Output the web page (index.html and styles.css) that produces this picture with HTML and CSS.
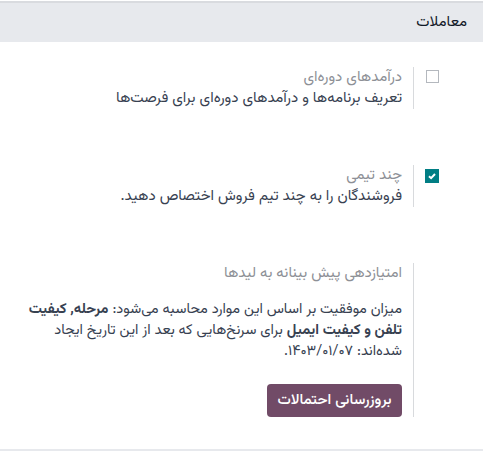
FILE: index.html
```html
<!DOCTYPE html>
<html lang="fa" dir="rtl">
<head>
<meta charset="utf-8">
<link rel="stylesheet" href="styles.css">
</head>
<body>
<div class="section-head">معاملات</div>
<div class="settings">
  <div class="setting">
    <div class="left-pane"><span class="check"></span></div>
    <div class="right-pane">
      <div class="label">درآمدهای دوره‌ای</div>
      <div class="desc">تعریف برنامه‌ها و درآمدهای دوره‌ای برای فرصت‌ها</div>
    </div>
  </div>
  <div class="setting">
    <div class="left-pane"><span class="check checked"><svg viewBox="0 0 14 14" width="14" height="14"><path d="M4 7.2 L6.1 9.2 L10 5" fill="none" stroke="#fff" stroke-width="2"/></svg></span></div>
    <div class="right-pane">
      <div class="label">چند تیمی</div>
      <div class="desc">فروشندگان را به چند تیم فروش اختصاص دهید.</div>
    </div>
  </div>
  <div class="setting">
    <div class="left-pane"></div>
    <div class="right-pane">
      <div class="label">امتیازدهی پیش بینانه به لیدها</div>
      <div class="para">میزان موفقیت بر اساس این موارد محاسبه می‌شود: <b>مرحله, کیفیت تلفن و کیفیت ایمیل</b> برای سرنخ‌هایی که بعد از این تاریخ ایجاد شده‌اند: ۱۴۰۳/۰۱/۰۷.</div>
      <div class="actions"><button class="btn-primary">بروزرسانی احتمالات</button></div>
    </div>
  </div>
</div>
<div class="next-head"></div>
</body>
</html>
```
FILE: styles.css
```css
html, body {
  margin: 0;
  padding: 0;
  background: #ffffff;
}
body {
  direction: rtl;
  font-family: "Vazirmatn", "Noto Sans Arabic", "DejaVu Sans", sans-serif;
  font-size: 15px;
  line-height: 21px;
  color: #374151;
  padding-top: 1px;
}
.section-head {
  border-top: 2px solid #d9dbdf;
  background: #e7e9ed;
  height: 39px;
  line-height: 39px;
  padding-right: 16px;
  font-weight: normal;
  color: #111827;
}
.settings {
  padding-top: 25px;
}
.setting {
  display: flex;
  padding-right: 44px;
  padding-left: 8px;
  margin-bottom: 56px;
}
.setting:last-child {
  margin-bottom: 32px;
}
.left-pane {
  width: 25px;
  flex: none;
}
.check {
  display: block;
  width: 13px;
  height: 13px;
  margin-top: 3px;
  box-sizing: border-box;
  border: 1px solid #b4b8be;
  background: #fff;
}
.check.checked {
  width: 14px;
  height: 14px;
  margin-top: 4px;
  border: none;
  background: #017e84;
}
.check svg {
  display: block;
}
.right-pane {
  flex: 1;
  border-right: 1px solid #d8dadd;
  padding-right: 11px;
}
.label {
  color: #8d9096;
}
.desc {
  color: #374151;
}
.para {
  margin-top: 15px;
  font-size: 14.5px;
  color: #374151;
}
.para b {
  font-weight: 700;
}
.actions {
  margin-top: 22px;
}
.btn-primary {
  font-family: inherit;
  font-size: 15px;
  font-weight: 500;
  line-height: 21px;
  color: #ffffff;
  background: #714b67;
  border: none;
  border-radius: 4px;
  height: 33px;
  width: 135px;
  padding: 0;
  display: block;
}
.next-head {
  height: 3px;
  background: #e7e9ed;
}
```
